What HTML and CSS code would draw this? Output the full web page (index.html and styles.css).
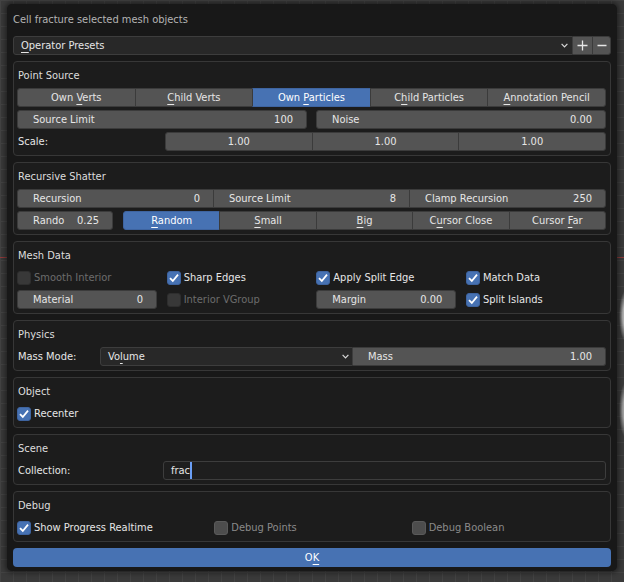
FILE: index.html
```html
<!DOCTYPE html>
<html>
<head>
<meta charset="utf-8">
<title>Cell fracture</title>
<link rel="stylesheet" href="styles.css">
</head>
<body>
<div class="viewport">
  <div class="popup">
    <div class="title">Cell fracture selected mesh objects</div>

    <div class="row presets">
      <div class="menu first"><span><u>O</u>perator Presets</span><svg class="chev" width="7" height="5" viewBox="0 0 7 5"><polyline points="0.6,0.8 3.5,3.8 6.4,0.8" fill="none" stroke="#d8d8d8" stroke-width="1.2"/></svg></div>
      <div class="b icon mid"><svg width="11" height="11" viewBox="0 0 11 11"><path d="M5.5 0.5v10M0.5 5.5h10" stroke="#e6e6e6" stroke-width="1.3"/></svg></div>
      <div class="b icon last"><svg width="10" height="11" viewBox="0 0 10 11"><path d="M0.5 5.5h9" stroke="#e6e6e6" stroke-width="1.3"/></svg></div>
    </div>

    <section class="panel">
      <div class="ph">Point Source</div>
      <div class="pbody">
        <div class="row seg">
          <div class="b">Own <u>V</u>erts</div>
          <div class="b"><u>C</u>hild Verts</div>
          <div class="b on">Own <u>P</u>articles</div>
          <div class="b">C<u>h</u>ild Particles</div>
          <div class="b"><u>A</u>nnotation Pencil</div>
        </div>
        <div class="row split2">
          <div class="b num"><span>Source Limit</span><span>100</span></div>
          <div class="b num"><span>Noise</span><span>0.00</span></div>
        </div>
        <div class="row">
          <div class="lbl wscale">Scale:</div>
          <div class="seg grow">
            <div class="b">1.00</div>
            <div class="b">1.00</div>
            <div class="b">1.00</div>
          </div>
        </div>
      </div>
    </section>

    <section class="panel">
      <div class="ph">Recursive Shatter</div>
      <div class="pbody">
        <div class="row seg">
          <div class="b num"><span>Recursion</span><span>0</span></div>
          <div class="b num"><span>Source Limit</span><span>8</span></div>
          <div class="b num"><span>Clamp Recursion</span><span>250</span></div>
        </div>
        <div class="row gap10">
          <div class="b num rando"><span>Rando</span><span>0.25</span></div>
          <div class="seg grow">
            <div class="b on"><u>R</u>andom</div>
            <div class="b"><u>S</u>mall</div>
            <div class="b"><u>B</u>ig</div>
            <div class="b">C<u>u</u>rsor Close</div>
            <div class="b">Cursor <u>F</u>ar</div>
          </div>
        </div>
      </div>
    </section>

    <section class="panel">
      <div class="ph">Mesh Data</div>
      <div class="pbody grid4">
        <div class="cb dis"><span class="box"></span><span>Smooth Interior</span></div>
        <div class="cb"><span class="box on"><svg width="12" height="12" viewBox="0 0 12 12"><polyline points="2,6.2 4.8,9 10,2.6" fill="none" stroke="#fff" stroke-width="1.8"/></svg></span><span>Sharp Edges</span></div>
        <div class="cb"><span class="box on"><svg width="12" height="12" viewBox="0 0 12 12"><polyline points="2,6.2 4.8,9 10,2.6" fill="none" stroke="#fff" stroke-width="1.8"/></svg></span><span>Apply Split Edge</span></div>
        <div class="cb"><span class="box on"><svg width="12" height="12" viewBox="0 0 12 12"><polyline points="2,6.2 4.8,9 10,2.6" fill="none" stroke="#fff" stroke-width="1.8"/></svg></span><span>Match Data</span></div>
        <div class="b num"><span>Material</span><span>0</span></div>
        <div class="cb dis"><span class="box"></span><span>Interior VGroup</span></div>
        <div class="b num"><span>Margin</span><span>0.00</span></div>
        <div class="cb"><span class="box on"><svg width="12" height="12" viewBox="0 0 12 12"><polyline points="2,6.2 4.8,9 10,2.6" fill="none" stroke="#fff" stroke-width="1.8"/></svg></span><span>Split Islands</span></div>
      </div>
    </section>

    <section class="panel">
      <div class="ph">Physics</div>
      <div class="pbody">
        <div class="massrow">
          <div class="lbl">Mass Mode:</div>
          <div class="menu first"><span>Vo<u>l</u>ume</span><svg class="chev" width="7" height="5" viewBox="0 0 7 5"><polyline points="0.6,0.8 3.5,3.8 6.4,0.8" fill="none" stroke="#d8d8d8" stroke-width="1.2"/></svg></div>
          <div class="b num last"><span>Mass</span><span>1.00</span></div>
        </div>
      </div>
    </section>

    <section class="panel">
      <div class="ph">Object</div>
      <div class="pbody">
        <div class="cb"><span class="box on"><svg width="12" height="12" viewBox="0 0 12 12"><polyline points="2,6.2 4.8,9 10,2.6" fill="none" stroke="#fff" stroke-width="1.8"/></svg></span><span>Recenter</span></div>
      </div>
    </section>

    <section class="panel">
      <div class="ph">Scene</div>
      <div class="pbody">
        <div class="row">
          <div class="lbl wcoll">Collection:</div>
          <div class="text"><span>frac</span><span class="caret"></span></div>
        </div>
      </div>
    </section>

    <section class="panel">
      <div class="ph">Debug</div>
      <div class="pbody grid3">
        <div class="cb"><span class="box on"><svg width="12" height="12" viewBox="0 0 12 12"><polyline points="2,6.2 4.8,9 10,2.6" fill="none" stroke="#fff" stroke-width="1.8"/></svg></span><span>Show Progress Realtime</span></div>
        <div class="cb off"><span class="box"></span><span>Debug Points</span></div>
        <div class="cb off"><span class="box"></span><span>Debug Boolean</span></div>
      </div>
    </section>

    <div class="ok">O<u>K</u></div>
  </div>
</div>
</body>
</html>
```

FILE: styles.css
```css
* {
  box-sizing: border-box;
  margin: 0;
  padding: 0;
}

html, body {
  width: 624px;
  height: 582px;
  overflow: hidden;
}

body {
  font-family: "DejaVu Sans Condensed", "DejaVu Sans", sans-serif;
  font-stretch: condensed;
  font-size: 11px;
  color: #e6e6e6;
  background: #393939;
}

u {
  text-decoration: underline;
  text-decoration-thickness: 1px;
  text-underline-offset: 2.5px;
}

.viewport {
  width: 624px;
  height: 582px;
  padding: 4px 0 0 7px;
  background-color: #3a3a3a;
  background-image:
    radial-gradient(ellipse 7px 26px at 626px 316px, #b0b0b0 0 45%, rgba(176,176,176,0) 100%),
    radial-gradient(ellipse 7px 28px at 626px 410px, #a0a0a0 0 45%, rgba(160,160,160,0) 100%),
    linear-gradient(to bottom, transparent 257px, #8e3b3b 257px, #8e3b3b 258px, transparent 258px),
    repeating-linear-gradient(to right, #434343 0 1px, transparent 1px 13px),
    repeating-linear-gradient(to bottom, #434343 0 1px, transparent 1px 13px);
}

.popup {
  width: 610px;
  background: #181818;
  border-radius: 5px;
  box-shadow: 0 0 5px 2px rgba(0, 0, 0, 0.45);
  padding: 6px 6px 4px;
  display: flex;
  flex-direction: column;
  gap: 6px;
}

.title {
  height: 20px;
  line-height: 20px;
  color: #b4b4b4;
}

.row {
  display: flex;
  height: 19px;
}

.grow {
  flex: 1;
}

.gap10 {
  gap: 10px;
}

.split2 {
  gap: 9px;
}

.split2 > .b {
  flex: 1 1 0;
}

/* panel */
.panel {
  border: 1px solid #373737;
  border-radius: 4px;
  background: #1c1c1c;
  padding: 0 4px 4px 3px;
}

.ph {
  height: 26px;
  line-height: 28px;
  padding-left: 1px;
  color: #dedede;
}

.pbody {
  display: flex;
  flex-direction: column;
  gap: 3px;
}

/* buttons */
.b {
  height: 19px;
  line-height: 17px;
  background: #545454;
  border: 1px solid #3b3b3b;
  border-radius: 3px;
  color: #e6e6e6;
  text-align: center;
  white-space: nowrap;
  overflow: hidden;
}

.b.on {
  background: #4772b3;
  border-color: #3e64a0;
  color: #ffffff;
}

.seg {
  display: flex;
}

.seg > .b {
  flex: 1 1 0;
  border-radius: 0;
}

.seg > .b + .b {
  border-left-color: #3b3b3b;
  margin-left: -1px;
}

.seg > .b:first-child {
  border-radius: 3px 0 0 3px;
}

.seg > .b:last-child {
  border-radius: 0 3px 3px 0;
}

.num {
  display: flex;
  justify-content: space-between;
  padding: 0 13px 0 15px;
  text-align: left;
}

.rando {
  width: 96px;
  flex: none;
}

.lbl {
  line-height: 19px;
  padding-left: 1px;
  white-space: nowrap;
}

.wscale {
  width: 148px;
}

.wcoll {
  width: 146px;
}

.massrow {
  display: grid;
  grid-template-columns: 83px 1fr 1fr;
  height: 19px;
}

/* dropdown menus */
.menu {
  flex: 1;
  display: flex;
  align-items: center;
  justify-content: space-between;
  height: 19px;
  background: #282828;
  border: 1px solid #3d3d3d;
  border-radius: 3px;
  padding: 0 3px 0 7px;
  color: #e6e6e6;
}

.menu.first {
  border-radius: 3px 0 0 3px;
}

.presets .menu {
  padding-right: 4px;
}

.num.last {
  border-radius: 0 3px 3px 0;
  border-left: none;
  padding-left: 15px;
}

.chev {
  display: block;
  flex: none;
}

.icon {
  display: flex;
  align-items: center;
  justify-content: center;
  border-radius: 0;
  border-left: 1px solid #3b3b3b;
}

.icon.mid {
  width: 20px;
  border-left: none;
}

.icon.last {
  width: 19px;
  border-radius: 0 3px 3px 0;
  margin-left: -1px;
}

/* checkboxes */
.grid4 {
  display: grid;
  grid-template-columns: repeat(4, 1fr);
  column-gap: 9.67px;
  row-gap: 3px;
}

.grid3 {
  display: grid;
  grid-template-columns: repeat(3, 1fr);
}

.cb {
  display: flex;
  align-items: center;
  gap: 3px;
  height: 19px;
  white-space: nowrap;
  color: #e6e6e6;
}

.box {
  width: 14px;
  height: 14px;
  flex: none;
  border-radius: 3px;
  background: #545454;
  border: 1px solid #3b3b3b;
  display: flex;
  align-items: center;
  justify-content: center;
}

.box.on {
  background: #4772b3;
  border-color: #3e64a0;
}

.box svg {
  display: block;
}

.cb.dis {
  color: #6c6c6c;
}

.cb.dis .box {
  background: #383838;
  border-color: #2e2e2e;
}

.cb.off {
  color: #8a8a8a;
}

.cb.off .box {
  background: #4d4d4d;
  border-color: #5a5a5a;
}

/* text field */
.text {
  flex: 1;
  display: flex;
  align-items: center;
  height: 19px;
  background: #1e1e1e;
  border: 1px solid #3d3d3d;
  border-radius: 3px;
  padding-left: 7px;
  color: #e6e6e6;
}

.caret {
  width: 2px;
  height: 17px;
  background: #6a9ef5;
}

/* OK */
.ok {
  height: 19px;
  line-height: 19px;
  background: #4772b3;
  border-radius: 4px;
  text-align: center;
  color: #ffffff;
}
```
